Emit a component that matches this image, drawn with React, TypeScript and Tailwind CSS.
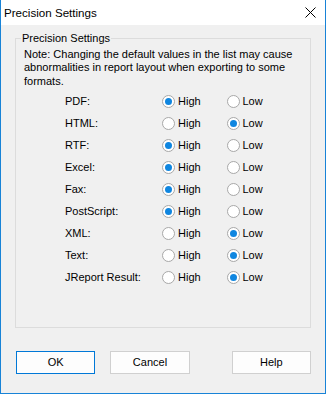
import React from "react";

type Level = "high" | "low";

const rows: { label: string; value: Level }[] = [
  { label: "PDF:", value: "high" },
  { label: "HTML:", value: "low" },
  { label: "RTF:", value: "high" },
  { label: "Excel:", value: "high" },
  { label: "Fax:", value: "high" },
  { label: "PostScript:", value: "high" },
  { label: "XML:", value: "low" },
  { label: "Text:", value: "low" },
  { label: "JReport Result:", value: "low" },
];

function Radio({ checked, label }: { checked: boolean; label: string }) {
  return (
    <div className="flex items-center">
      <span className="flex h-[13px] w-[13px] items-center justify-center rounded-full border border-[#a8a8a8] bg-white">
        {checked && <span className="h-[7px] w-[7px] rounded-full bg-[#0f86e0]" />}
      </span>
      <span className="ml-[3px]">{label}</span>
    </div>
  );
}

function Button({ label, primary, className }: { label: string; primary?: boolean; className?: string }) {
  return (
    <button
      type="button"
      className={`h-[23px] w-[80px] border bg-[#fdfdfd] text-black ${
        primary ? "border-[#0078d7]" : "border-[#d0d0d0]"
      } ${className ?? ""}`}
    >
      {label}
    </button>
  );
}

export default function App() {
  return (
    <div
      className="flex h-[394px] w-[326px] flex-col border-x border-b border-[#1883d7] bg-[#f0f0f0] text-[11px] text-black"
      style={{ fontFamily: '"Liberation Sans", Arial, sans-serif' }}
    >
      {/* Title bar */}
      <div className="flex h-[25px] items-center justify-between bg-white pl-[3px] pr-[9px]">
        <span className="text-[11.6px]">Precision Settings</span>
        <svg width="11" height="11" viewBox="0 0 11 11" className="text-black">
          <path d="M0.5 0.5 L10.5 10.5 M10.5 0.5 L0.5 10.5" stroke="currentColor" strokeWidth="1" />
        </svg>
      </div>

      <div className="flex flex-col px-[14px] pt-[13px]">
        {/* Group box */}
        <div className="relative h-[290px] w-[296px] border border-[#dcdcdc] pt-[8.5px]">
          <span className="absolute left-[5px] top-[-9px] bg-[#f0f0f0] px-[1px] leading-[16px]">
            Precision Settings
          </span>
          <div className="ml-[8px] whitespace-nowrap leading-[13.6px]">
            Note: Changing the default values in the list may cause
            <br />
            abnormalities in report layout when exporting to some
            <br />
            formats.
          </div>

          <div className="mt-[2.4px] flex flex-col">
            {rows.map((r) => (
              <div key={r.label} className="flex h-[22px] items-center">
                <span className="ml-[49px] w-[97px]">{r.label}</span>
                <div className="w-[64.5px]">
                  <Radio checked={r.value === "high"} label="High" />
                </div>
                <Radio checked={r.value === "low"} label="Low" />
              </div>
            ))}
          </div>
        </div>

        <div className="mt-[23px] flex pl-[1px]">
          <Button label="OK" primary />
          <Button label="Cancel" className="ml-[15px]" />
          <Button label="Help" className="ml-[42px]" />
        </div>
      </div>
    </div>
  );
}
